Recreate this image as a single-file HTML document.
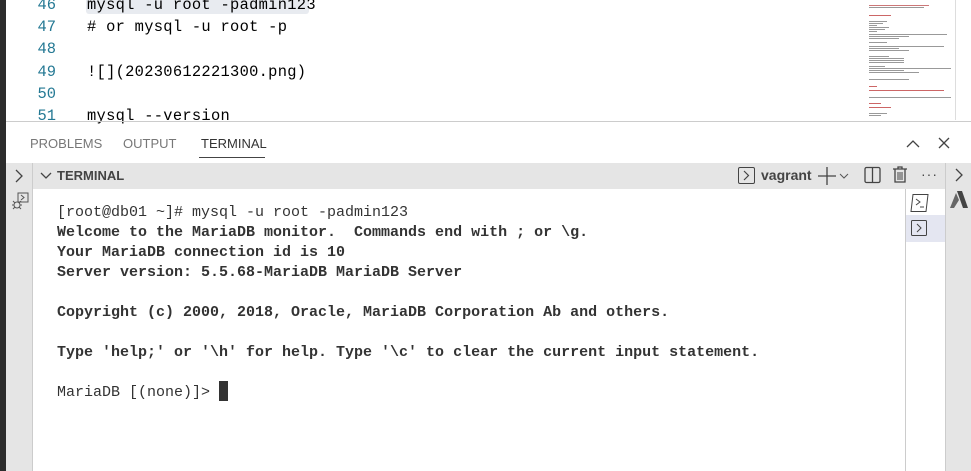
<!DOCTYPE html>
<html><head><meta charset="utf-8"><style>
*{margin:0;padding:0;box-sizing:border-box}
body{width:971px;height:471px;overflow:hidden;background:#fff;position:relative;font-family:"Liberation Sans",sans-serif}
.abs{position:absolute}
.mono{font-family:"Liberation Mono",monospace}
.ln{position:absolute;left:0;width:56px;text-align:right;color:#237893;font-size:15.4px}
.code{position:absolute;left:87px;color:#000;font-size:15.4px;white-space:pre;letter-spacing:0.3px}
.term{position:absolute;left:57px;font-size:15px;color:#333;white-space:pre;line-height:20px}
.b{font-weight:bold}
.mm{position:absolute;height:1px;background:#999}
</style></head><body>
<div class="abs" style="left:0;top:0;width:6px;height:471px;background:#2c2c2c"></div>
<div class="abs" style="left:86px;top:-6px;width:223px;height:20px;background:#e8ebf0;border-radius:3px"></div>
<div class="mono">
<div class="ln" style="top:-4px">46</div><div class="code" style="top:-4px">mysql -u root -padmin123</div>
<div class="ln" style="top:18px">47</div><div class="code" style="top:18px"># or mysql -u root -p</div>
<div class="ln" style="top:40px">48</div>
<div class="ln" style="top:63px">49</div><div class="code" style="top:63px">![](20230612221300.png)</div>
<div class="ln" style="top:85px">50</div>
<div class="ln" style="top:107px">51</div><div class="code" style="top:107px">mysql --version</div>
</div>
<div class="abs" style="left:866px;top:0;width:90px;height:120px;overflow:hidden">
<div class="mm" style="top:5px;left:3px;width:60px;background:#c77"></div>
<div class="mm" style="top:7px;left:3px;width:55px"></div>
<div class="mm" style="top:15px;left:3px;width:22px;background:#c66"></div>
<div class="mm" style="top:21px;left:3px;width:18px"></div><div class="mm" style="top:23px;left:3px;width:14px"></div>
<div class="mm" style="top:25px;left:3px;width:8px"></div><div class="mm" style="top:27px;left:3px;width:20px"></div>
<div class="mm" style="top:29px;left:3px;width:16px"></div><div class="mm" style="top:31px;left:3px;width:8px"></div>
<div class="mm" style="top:34px;left:3px;width:78px"></div><div class="mm" style="top:36px;left:3px;width:40px"></div>
<div class="mm" style="top:38px;left:3px;width:30px"></div><div class="mm" style="top:42px;left:3px;width:18px"></div>
<div class="mm" style="top:46px;left:3px;width:75px"></div><div class="mm" style="top:48px;left:3px;width:30px"></div>
<div class="mm" style="top:50px;left:3px;width:40px"></div>
<div class="mm" style="top:56px;left:3px;width:20px"></div><div class="mm" style="top:58px;left:3px;width:35px"></div>
<div class="mm" style="top:60px;left:3px;width:35px"></div><div class="mm" style="top:62px;left:3px;width:35px"></div>
<div class="mm" style="top:66px;left:3px;width:16px"></div><div class="mm" style="top:68px;left:3px;width:82px"></div>
<div class="mm" style="top:70px;left:3px;width:35px"></div><div class="mm" style="top:72px;left:3px;width:50px"></div>
<div class="mm" style="top:79px;left:3px;width:40px"></div>
<div class="mm" style="top:86px;left:3px;width:8px;background:#c66"></div>
<div class="mm" style="top:90px;left:3px;width:75px;background:#c66"></div>
<div class="mm" style="top:97px;left:3px;width:82px"></div>
<div class="mm" style="top:103px;left:3px;width:12px;background:#c66"></div>
<div class="mm" style="top:107px;left:3px;width:22px;background:#c66"></div>
<div class="mm" style="top:113px;left:3px;width:18px"></div><div class="mm" style="top:115px;left:3px;width:12px"></div>
</div>
<div class="abs" style="left:955px;top:0;width:1px;height:120px;background:#ddd"></div>
<div class="abs" style="left:6px;top:121px;width:965px;height:1px;background:#ccc"></div>
<div class="abs" style="left:30px;top:136px;font-size:13px;color:#777">PROBLEMS</div>
<div class="abs" style="left:123px;top:136px;font-size:13px;color:#777">OUTPUT</div>
<div class="abs" style="left:201px;top:136px;font-size:13px;color:#333">TERMINAL</div>
<div class="abs" style="left:199px;top:157px;width:66px;height:1px;background:#444"></div>
<svg class="abs" style="left:905px;top:135px" width="50" height="16"><path d="M2 12l6-6 6 6" stroke="#444" fill="none" stroke-width="1.3"/><path d="M34 3l10 10M44 3l-10 10" stroke="#444" stroke-width="1.3"/></svg>
<div class="abs" style="left:6px;top:163px;width:965px;height:26px;background:#e5e5e5"></div>
<div class="abs" style="left:32px;top:163px;width:1px;height:308px;background:#ccc"></div>
<div class="abs" style="left:6px;top:189px;width:26px;height:282px;background:#e5e5e5"></div>
<div class="abs" style="left:945px;top:163px;width:26px;height:308px;background:#e5e5e5;border-left:1px solid #ccc"></div>
<svg class="abs" style="left:13px;top:168px" width="12" height="16"><path d="M3 2l6 6-6 6" stroke="#444" fill="none" stroke-width="1.3"/></svg>
<svg class="abs" style="left:40px;top:171px" width="12" height="10"><path d="M1 2l5 5 5-5" stroke="#444" fill="none" stroke-width="1.3"/></svg>
<div class="abs" style="left:57px;top:168px;font-size:13px;font-weight:bold;color:#444">TERMINAL</div>
<svg class="abs" style="left:10px;top:191px" width="20" height="20"><rect x="8" y="2" width="10" height="9" fill="none" stroke="#555"/><path d="M11 4l3 2.5-3 2.5" stroke="#555" fill="none"/><circle cx="7" cy="14" r="3" fill="none" stroke="#555"/><path d="M2 14h2M10 14h2M3 10l2 2M11 10l-2 2M3 18l2-2M11 18l-2-2" stroke="#555"/></svg>
<svg class="abs" style="left:737px;top:166px" width="20" height="20"><rect x="1.5" y="1.5" width="16" height="16" rx="1.5" fill="none" stroke="#444"/><path d="M7 5l4.5 4.5L7 14" stroke="#444" fill="none" stroke-width="1.2"/></svg>
<div class="abs" style="left:761px;top:167px;font-size:14px;font-weight:bold;color:#444">vagrant</div>
<svg class="abs" style="left:818px;top:166px" width="38" height="20"><path d="M9 1v18M0 10h18" stroke="#444" stroke-width="1.3"/><path d="M22 8l4 4 4-4" stroke="#555" fill="none"/></svg>
<svg class="abs" style="left:864px;top:166px" width="18" height="18"><rect x="1" y="1.5" width="15" height="15" rx="1.5" fill="none" stroke="#444" stroke-width="1.3"/><path d="M8.5 1.5v15" stroke="#444" stroke-width="1.3"/></svg>
<svg class="abs" style="left:892px;top:165px" width="16" height="20"><path d="M1 4h14M6 4V2h4v2" stroke="#444" fill="none" stroke-width="1.3"/><path d="M3 4v13h10V4" stroke="#444" fill="none" stroke-width="1.3"/><path d="M6 7v8M8 7v8M10 7v8" stroke="#444"/></svg>
<div class="abs" style="left:921px;top:166px;font-size:14px;color:#444;letter-spacing:1px">···</div>
<svg class="abs" style="left:953px;top:167px" width="12" height="16"><path d="M3 2l6 6-6 6" stroke="#444" fill="none" stroke-width="1.3"/></svg>
<div class="abs" style="left:905px;top:189px;width:1px;height:282px;background:#ccc"></div>
<svg class="abs" style="left:909px;top:193px" width="22" height="20"><path d="M4 1.5h15l-2 17H2z" fill="none" stroke="#444"/><path d="M7 6l4 3-4 3M11 14h4" stroke="#444" fill="none"/></svg>
<div class="abs" style="left:906px;top:215px;width:39px;height:27px;background:#e4e6f1"></div>
<svg class="abs" style="left:910px;top:219px" width="20" height="20"><rect x="1.5" y="1.5" width="15" height="15" rx="1" fill="none" stroke="#444"/><path d="M7 5l4 4-4 4" stroke="#444" fill="none"/></svg>
<svg class="abs" style="left:949px;top:190px" width="20" height="20"><path d="M8 1h5l6 17h-5z" fill="#444"/><path d="M7 3l3 7-5 8H1z" fill="#666"/></svg>
<div class="mono">
<div class="term" style="top:203px">[root@db01 ~]# mysql -u root -padmin123</div>
<div class="term b" style="top:223px">Welcome to the MariaDB monitor.  Commands end with ; or \g.</div>
<div class="term b" style="top:243px">Your MariaDB connection id is 10</div>
<div class="term b" style="top:263px">Server version: 5.5.68-MariaDB MariaDB Server</div>
<div class="term b" style="top:303px">Copyright (c) 2000, 2018, Oracle, MariaDB Corporation Ab and others.</div>
<div class="term b" style="top:343px">Type 'help;' or '\h' for help. Type '\c' to clear the current input statement.</div>
<div class="term" style="top:383px">MariaDB [(none)]></div>
</div>
<div class="abs" style="left:219px;top:381px;width:9px;height:20px;background:#333"></div>
</body></html>
